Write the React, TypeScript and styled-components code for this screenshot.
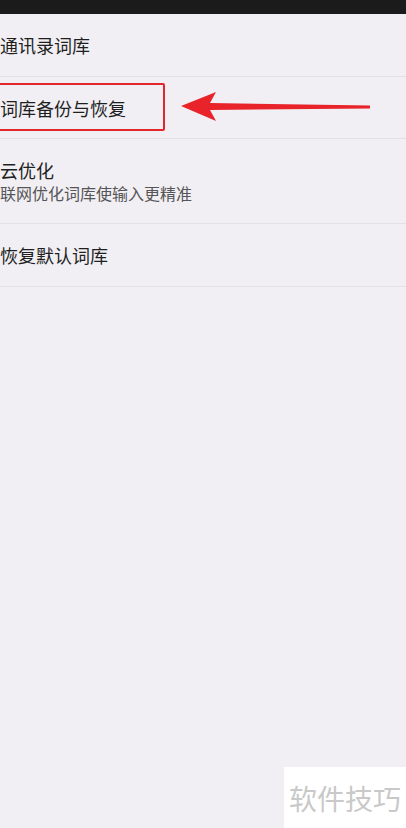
import React from "react";
import styled, { createGlobalStyle } from "styled-components";

const Global = createGlobalStyle`
  html, body { margin: 0; padding: 0; background: #f1eff4; }
  body { font-family: "Noto Sans CJK SC", "Noto Sans", sans-serif; }
  #root { min-height: 828px; }
`;

const Page = styled.div`
  position: relative;
  width: 406px;
  height: 828px;
  overflow: hidden;
  background: #f1eff4;
`;

const StatusBar = styled.div`
  height: 14px;
  background: #1b1b1b;
`;

const List = styled.div`
  display: flex;
  flex-direction: column;
`;

const Row = styled.div<{ $h: number }>`
  position: relative;
  height: ${(p) => p.$h}px;
  display: flex;
  flex-direction: column;
  justify-content: center;
  border-bottom: 1px solid #e3e1e6;
  padding-left: 0;
`;

const Title = styled.div`
  font-size: 18px;
  line-height: 22px;
  color: #1f1f1f;
`;

const Sub = styled.div`
  font-size: 16px;
  line-height: 20px;
  color: #555;
  margin-top: 2px;
`;

const Highlight = styled.div`
  position: absolute;
  left: -12px;
  top: 6px;
  width: 173px;
  height: 44px;
  border: 2px solid #e3262b;
  border-radius: 2px;
`;

const Arrow = styled.svg`
  position: absolute;
  left: 178px;
  top: 88px;
`;

const Watermark = styled.div`
  position: absolute;
  right: 0;
  bottom: 0;
  width: 122px;
  height: 61px;
  background: #ffffff;
  display: flex;
  align-items: center;
  justify-content: center;
  font-size: 28px;
  color: #c9c9c9;
`;

export default function App() {
  return (
    <Page>
      <Global />
      <StatusBar />
      <List>
        <Row $h={62}>
          <Title>通讯录词库</Title>
        </Row>
        <Row $h={61}>
          <Highlight />
          <Title>词库备份与恢复</Title>
        </Row>
        <Row $h={84}>
          <Title>云优化</Title>
          <Sub>联网优化词库使输入更精准</Sub>
        </Row>
        <Row $h={62}>
          <Title>恢复默认词库</Title>
        </Row>
      </List>
      <Arrow width="196" height="36" viewBox="0 0 196 36">
        <path
          d="M3 18 L38 4 L32 15 L192 17.5 L192 20.5 L32 22 L38 33 Z"
          fill="#e8232a"
        />
      </Arrow>
      <Watermark>软件技巧</Watermark>
    </Page>
  );
}
